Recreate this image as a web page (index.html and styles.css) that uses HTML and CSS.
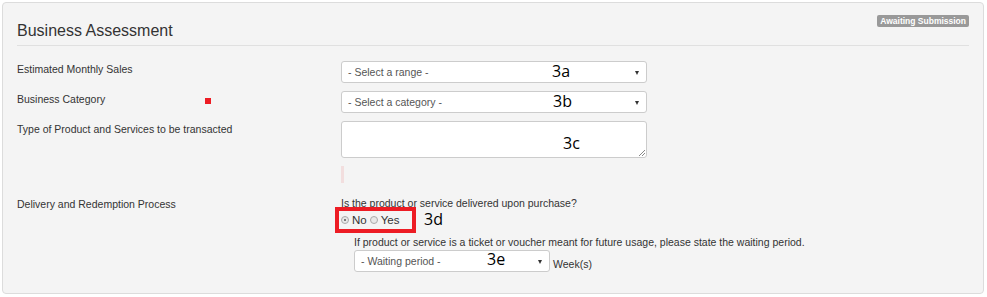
FILE: index.html
```html
<!DOCTYPE html>
<html lang="en">
<head>
    <meta charset="UTF-8">
    <meta name="viewport" content="width=device-width, initial-scale=1.0">
    <title>Business Assessment</title>
    <link rel="stylesheet" href="styles.css">
</head>
<body>
    <div class="panel">
        <div class="panel-head">
            <h2>Business Assessment</h2>
            <span class="badge">Awaiting Submission</span>
        </div>

        <div class="form-row">
            <label>Estimated Monthly Sales</label>
            <div class="field">
                <div class="select">- Select a range -<span class="note note-a">3a</span><span class="caret"></span></div>
            </div>
        </div>

        <div class="form-row">
            <label>Business Category <span class="marker"></span></label>
            <div class="field">
                <div class="select">- Select a category -<span class="note note-b">3b</span><span class="caret"></span></div>
            </div>
        </div>

        <div class="form-row">
            <label>Type of Product and Services to be transacted</label>
            <div class="field">
                <div class="textarea"><span class="note note-c">3c</span><span class="grip"></span></div>
                <div class="counter"></div>
            </div>
        </div>

        <div class="form-row row-delivery">
            <label>Delivery and Redemption Process</label>
            <div class="field">
                <p class="question">Is the product or service delivered upon purchase?</p>
                <div class="radios">
                    <div class="highlight">
                        <span class="radio checked"></span> No
                        <span class="radio"></span> Yes
                    </div>
                    <span class="note note-d">3d</span>
                </div>
                <div class="waiting">
                    <p class="hint">If product or service is a ticket or voucher meant for future usage, please state the waiting period.</p>
                    <div class="waiting-line">
                        <div class="select select-small">- Waiting period -<span class="note note-e">3e</span><span class="caret"></span></div>
                        <span class="unit">Week(s)</span>
                    </div>
                </div>
            </div>
        </div>
    </div>
</body>
</html>
```

FILE: styles.css
```css
body {
    margin: 0;
    background-color: #ffffff;
    font-family: 'Liberation Sans', Arial, sans-serif;
    font-size: 10.5px;
    color: #333;
}

.panel {
    margin: 2px 3px 3px 2px;
    height: 292px;
    box-sizing: border-box;
    background-color: #f4f4f4;
    border: 1px solid #dcdcdc;
    border-radius: 4px;
    padding: 0 14px;
}

.panel-head {
    display: flex;
    justify-content: space-between;
    align-items: flex-start;
    border-bottom: 1px solid #e0e0e0;
    height: 42px;
    margin-bottom: 15px;
}

.panel-head h2 {
    margin: 18px 0 0 0;
    font-size: 16px;
    font-weight: normal;
    line-height: 20px;
    color: #333;
}

.badge {
    margin-top: 12px;
    background-color: #999;
    color: #fff;
    font-size: 8.5px;
    font-weight: bold;
    line-height: 10px;
    padding: 1px 3px;
    border-radius: 2px;
}

.form-row {
    display: grid;
    grid-template-columns: 324px 1fr;
    margin-bottom: 8px;
}

.form-row label {
    padding-top: 1px;
    line-height: 14px;
    position: relative;
}

.marker {
    position: absolute;
    left: 188px;
    top: 7px;
    width: 6px;
    height: 6px;
    background-color: #ed1c24;
}

.field {
    position: relative;
}

.select {
    position: relative;
    width: 306px;
    height: 22px;
    box-sizing: border-box;
    background-color: #fff;
    border: 1px solid #ccc;
    border-radius: 3px;
    padding: 0 6px;
    line-height: 20px;
    color: #555;
}

.caret {
    position: absolute;
    right: 7px;
    top: 9px;
    border-left: 2px solid transparent;
    border-right: 2px solid transparent;
    border-top: 4px solid #333;
}

.note {
    position: absolute;
    font-family: 'Open Sans', 'Liberation Sans', sans-serif;
    font-size: 16px;
    line-height: 16px;
    color: #000;
}

.note-a { left: 210px; top: 1px; }
.note-b { left: 211px; top: 1px; }
.note-c { left: 221px; top: 13px; }
.note-d { left: 89px; top: 4px; }
.note-e { left: 132px; top: 0px; }

.textarea {
    position: relative;
    width: 306px;
    height: 37px;
    box-sizing: border-box;
    background-color: #fff;
    border: 1px solid #ccc;
    border-radius: 3px;
}

.grip {
    position: absolute;
    right: 1px;
    bottom: 1px;
    width: 6px;
    height: 6px;
    background: linear-gradient(135deg, transparent 45%, #888 46%, #888 55%, transparent 56%, transparent 70%, #888 71%, #888 80%, transparent 81%);
}

.counter {
    width: 3px;
    height: 17px;
    margin-top: 8px;
    background-color: #f2dede;
}

.row-delivery {
    margin-top: 13px;
}

.question {
    margin: 0;
    line-height: 14px;
}

.radios {
    position: relative;
    height: 26px;
    margin-top: -3px;
    margin-left: -6px;
}

.highlight {
    display: inline-flex;
    align-items: center;
    gap: 3px;
    width: 81px;
    height: 26px;
    box-sizing: border-box;
    border: 4px solid #ed1c24;
    padding-left: 2px;
    line-height: 14px;
    color: #333;
    font-size: 11.5px;
}

.radio {
    display: inline-block;
    width: 6px;
    height: 6px;
    border-radius: 50%;
    border: 1px solid #aaa;
    background-color: #e8e8e8;
    position: relative;
}

.radio.checked::after {
    content: "";
    position: absolute;
    left: 2px;
    top: 2px;
    width: 2px;
    height: 2px;
    border-radius: 50%;
    background-color: #555;
}

.waiting {
    margin-left: 13px;
    margin-top: 2px;
}

.hint {
    margin: 0 0 1px 0;
    line-height: 14px;
}

.waiting-line {
    display: flex;
    align-items: flex-end;
    gap: 3px;
}

.select-small {
    width: 196px;
}

.unit {
    line-height: 14px;
    color: #333;
    margin-bottom: 1px;
}
```
